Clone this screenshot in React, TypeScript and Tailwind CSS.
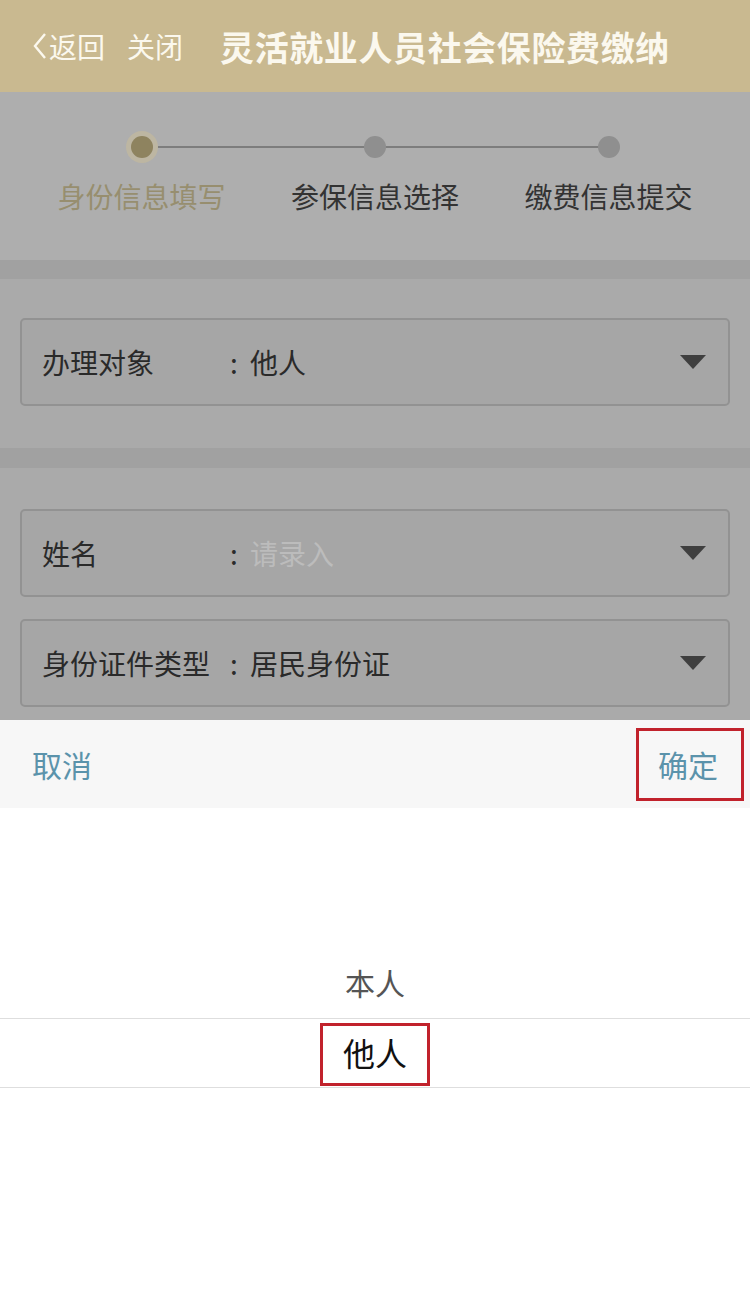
import React from "react";

const font = { fontFamily: '"Noto Sans CJK SC", "Noto Sans", sans-serif' };

const steps = ["身份信息填写", "参保信息选择", "缴费信息提交"];

function Caret() {
  return (
    <svg width="26" height="15" viewBox="0 0 26 15" className="shrink-0">
      <polygon points="0,0 26,0 13,14" fill="#3f3f3f" />
    </svg>
  );
}

function Field({ label, value, placeholder }: { label: string; value?: string; placeholder?: string }) {
  return (
    <div className="mx-5 h-[88px] flex items-center rounded-[5px] border-2 border-[#929292] bg-[#a6a6a6] pl-[20px] pr-[22px]">
      <span className="w-[188px] text-[28px] text-[#2a2a2a] whitespace-nowrap">{label}</span>
      <span className="text-[28px] text-[#2a2a2a] w-[20px]">:</span>
      {value ? (
        <span className="flex-1 text-[28px] text-[#2a2a2a]">{value}</span>
      ) : (
        <span className="flex-1 text-[28px] text-[#bcbcbc]">{placeholder}</span>
      )}
      <Caret />
    </div>
  );
}

export default function App() {
  return (
    <div className="w-[750px] h-[1297px] bg-white overflow-hidden flex flex-col" style={font}>
      {/* header */}
      <div className="h-[92px] bg-[#c9b990] flex items-center text-[#fbf8ee]">
        <div className="flex items-center pl-[33px]">
          <svg width="14" height="28" viewBox="0 0 14 28">
            <polyline points="12,2 2,14 12,26" fill="none" stroke="#fbf8ee" strokeWidth="2.4" />
          </svg>
          <span className="text-[28px] ml-[2px]">返回</span>
        </div>
        <span className="text-[28px] ml-[22px]">关闭</span>
        <span className="text-[34px] font-bold ml-[37px] tracking-[0.6px] whitespace-nowrap">灵活就业人员社会保险费缴纳</span>
      </div>

      {/* steps */}
      <div className="h-[168px] bg-[#aeaeae] pt-[39px]">
        <div className="relative mx-auto w-[499px] h-[32px] flex items-center justify-between">
          <div className="absolute left-[16px] right-[16px] top-[15px] h-[2px] bg-[#7d7d7d]" />
          <div className="relative w-[32px] h-[32px] rounded-full bg-[#bdb6a2] flex items-center justify-center">
            <div className="w-[22px] h-[22px] rounded-full bg-[#8e835f]" />
          </div>
          <div className="relative w-[32px] h-[32px] flex items-center justify-center">
            <div className="w-[22px] h-[22px] rounded-full bg-[#8f8f8f]" />
          </div>
          <div className="relative w-[32px] h-[32px] flex items-center justify-center">
            <div className="w-[22px] h-[22px] rounded-full bg-[#8f8f8f]" />
          </div>
        </div>
        <div className="flex justify-between w-[667px] mx-auto mt-[12px]">
          {steps.map((s, i) => (
            <span key={s} className={`w-[200px] text-center text-[28px] ${i === 0 ? "text-[#978e6f]" : "text-[#333333]"}`}>
              {s}
            </span>
          ))}
        </div>
      </div>

      <div className="h-[19px] bg-[#a1a1a1]" />

      <div className="h-[169px] bg-[#aaaaaa] pt-[39px]">
        <Field label="办理对象" value="他人" />
      </div>

      <div className="h-[20px] bg-[#a1a1a1]" />

      <div className="h-[252px] bg-[#aaaaaa] pt-[41px] flex flex-col gap-[22px]">
        <Field label="姓名" placeholder="请录入" />
        <Field label="身份证件类型" value="居民身份证" />
      </div>

      {/* bottom sheet */}
      <div className="h-[88px] bg-[#f7f7f7] flex items-center justify-between pl-[32px] pr-[6px]">
        <span className="text-[30px] text-[#5b93ab]">取消</span>
        <div className="w-[108px] h-[73px] border-[3px] border-[#c1222c] flex items-center justify-center">
          <span className="text-[30px] text-[#5b93ab] -ml-[4px]">确定</span>
        </div>
      </div>

      <div className="flex-1 bg-white flex flex-col items-center pt-[140px]">
        <div className="h-[70px] w-full flex items-center justify-center">
          <span className="text-[30px] text-[#555555] -mt-[2px]">本人</span>
        </div>
        <div className="w-full h-[70px] border-y border-[#dedede] flex items-center justify-center">
          <div className="w-[110px] h-[63px] mt-[3px] border-[3px] border-[#c1222c] flex items-center justify-center">
            <span className="text-[32px] text-[#111111] -mt-[5px]">他人</span>
          </div>
        </div>
      </div>
    </div>
  );
}
